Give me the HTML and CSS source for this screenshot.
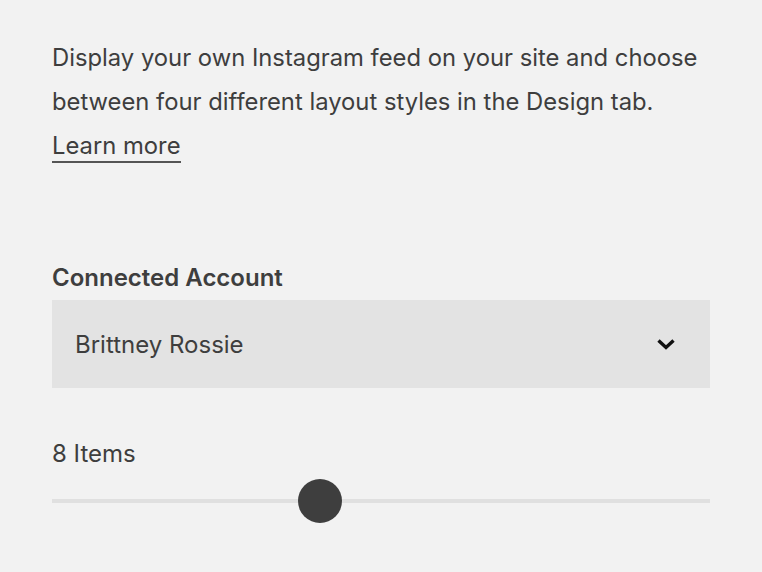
FILE: index.html
```html
<!DOCTYPE html>
<html>
<head>
<meta charset="utf-8">
<link rel="stylesheet" href="styles.css">
</head>
<body>
<div class="panel">
  <p class="desc">Display your own Instagram feed on your site and choose between four different layout styles in the Design tab.<br><a class="learn" href="#">Learn more</a></p>
  <div class="field">
    <div class="label">Connected Account</div>
    <div class="select">
      <span>Brittney Rossie</span>
      <svg class="chev" width="20" height="14" viewBox="0 0 20 14"><path d="M2.5 3.5 L10 10.5 L17.5 3.5" fill="none" stroke="#111" stroke-width="3.4"/></svg>
    </div>
  </div>
  <div class="slider-field">
    <div class="items">8 Items</div>
    <div class="track"><div class="thumb" style="left: 246px"></div></div>
  </div>
</div>
</body>
</html>
```
FILE: styles.css
```css
html, body { margin: 0; padding: 0; }
body {
  background: #f2f2f2;
  font-family: Inter, "Noto Sans", sans-serif;
  color: #3e3e3e;
  width: 762px;
  height: 572px;
  overflow: hidden;
}
.panel {
  padding: 36px 52px 0 52px;
}
.desc {
  margin: 0;
  font-size: 23.8px;
  line-height: 44px;
}
.learn {
  color: #3e3e3e;
  text-decoration: none;
  border-bottom: 2px solid #555;
  padding-bottom: 1px;
}
.field {
  margin-top: 94px;
}
.label {
  font-size: 24px;
  font-weight: 600;
  line-height: 32px;
  margin-bottom: 6px;
}
.select {
  background: #e3e3e3;
  height: 88px;
  display: flex;
  align-items: center;
  justify-content: space-between;
  padding: 0 34px 0 23px;
  font-size: 24px;
}
.chev { display: block; }
.slider-field {
  margin-top: 50px;
}
.items {
  font-size: 24px;
  line-height: 32px;
}
.track {
  position: relative;
  margin-top: 29px;
  height: 4px;
  background: #e0e0e0;
}
.thumb {
  position: absolute;
  top: -20px;
  width: 44px;
  height: 44px;
  border-radius: 50%;
  background: #3e3e3e;
}
```
